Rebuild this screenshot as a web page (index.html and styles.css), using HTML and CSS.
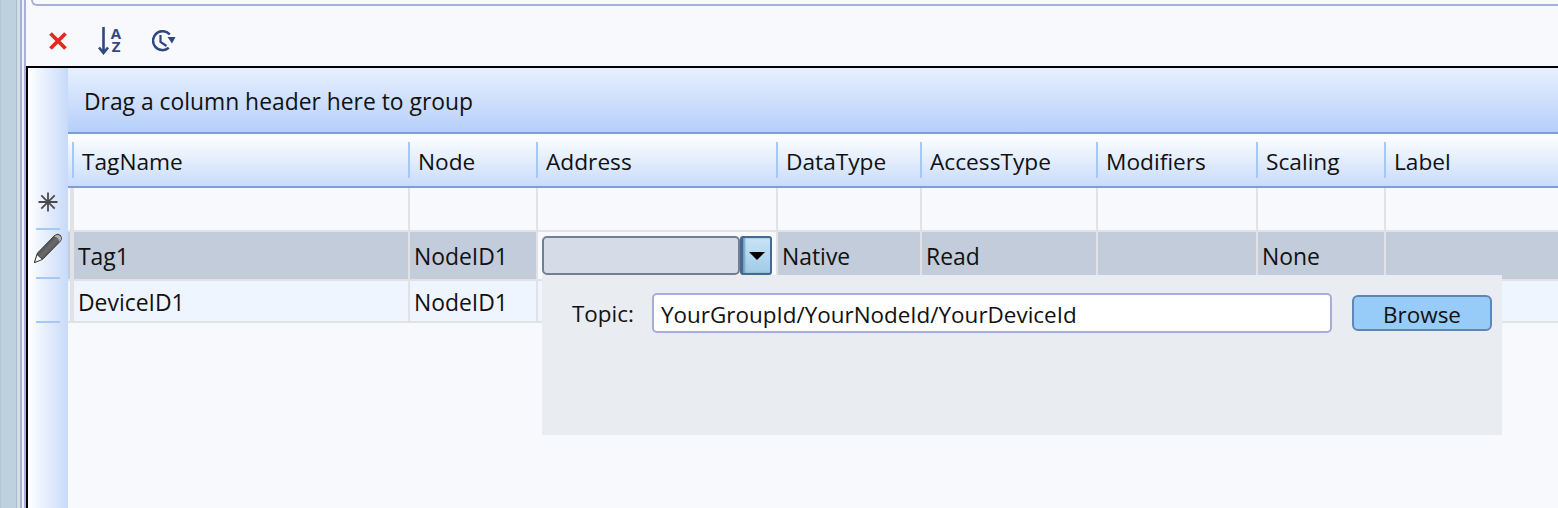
FILE: index.html
```html
<!DOCTYPE html>
<html lang="en">
<head>
<meta charset="utf-8">
<title>Tags</title>
<link rel="stylesheet" href="styles.css">
</head>
<body>
<div class="page">
  <div class="rail"></div>
  <div class="main">
    <div class="top-panel"></div>
    <div class="toolbar">
      <svg class="tool-icon" width="20" height="20" viewBox="0 0 20 20"><path d="M2.500 2.500 L17.500 17.500 M17.500 2.500 L2.500 17.500" stroke="#e8281e" stroke-width="3.800" fill="none"/></svg>
      <div class="sort-icon">
        <svg width="11" height="28" viewBox="0 0 11 28"><path d="M5.500 0 V26 M1 20.500 L5.500 26 L10 20.500" stroke="#33477f" stroke-width="2.600" fill="none"/></svg>
        <div class="az">A Z</div>
      </div>
      <svg class="tool-icon" width="24" height="22" viewBox="0 0 24 22"><path d="M16.800 17.800 A9.500 9.500 0 1 1 17.800 4.500" stroke="#33477f" stroke-width="2.500" fill="none"/><path d="M8.500 5 V12 L14.500 16" stroke="#33477f" stroke-width="2.200" fill="none"/><path d="M15.500 7 H23.500 L20 13.500 Z" fill="#33477f"/></svg>
    </div>
    <div class="grid">
      <div class="indicators">
        <div class="ind-head"></div>
        <div class="ind-cell ind-new"><svg width="20" height="20" viewBox="0 0 20 20"><path d="M10 0.500 V19.500 M0.500 10 H19.500 M3.300 3.300 L16.700 16.700 M16.700 3.300 L3.300 16.700" stroke="#4a4a4a" stroke-width="1.800" fill="none"/></svg></div>
        <div class="ind-cell ind-edit"><svg width="28" height="30" viewBox="0 0 28 30"><defs><linearGradient id="pen" x1="0" y1="0" x2="1" y2="1"><stop offset="0" stop-color="#111"/><stop offset="0.500" stop-color="#6a6a6a"/><stop offset="1" stop-color="#222"/></linearGradient></defs><path d="M0.500 29.500 L3.500 20 L20.500 2.500 Q24 0 26.500 2.500 Q28.500 5.500 26.500 8 L9.500 25.500 Z" fill="url(#pen)" stroke="#222" stroke-width="0.800"/><path d="M20.500 3 Q24 1 26.500 3.500 Q28 6 26 8 L25 8.500 Q25 4.500 20.500 3.500 Z" fill="#b5b5b5"/><path d="M0.500 29.500 L3 21.500 L8.500 26.500 Z" fill="#f8f8f8" stroke="#222" stroke-width="0.800"/></svg></div>
        <div class="ind-cell ind-plain"></div>
      </div>
      <div class="content">
        <div class="group-panel">Drag a column header here to group</div>
        <div class="columns">
          <div class="head c1">TagName</div>
          <div class="head c2">Node</div>
          <div class="head c3">Address</div>
          <div class="head c4">DataType</div>
          <div class="head c5">AccessType</div>
          <div class="head c6">Modifiers</div>
          <div class="head c7">Scaling</div>
          <div class="head c8">Label</div>
        </div>
        <div class="row row-new">
          <div class="cell c1"></div><div class="cell c2"></div><div class="cell c3"></div><div class="cell c4"></div><div class="cell c5"></div><div class="cell c6"></div><div class="cell c7"></div><div class="cell c8"></div>
        </div>
        <div class="row row-edit">
          <div class="cell c1">Tag1</div><div class="cell c2">NodeID1</div>
          <div class="cell c3 cell-editor">
            <div class="combo"><div class="combo-input"></div><div class="combo-btn"><span class="arrow"></span></div></div>
          </div>
          <div class="cell c4">Native</div><div class="cell c5">Read</div><div class="cell c6"></div><div class="cell c7">None</div><div class="cell c8"></div>
        </div>
        <div class="row row-data">
          <div class="cell c1">DeviceID1</div><div class="cell c2">NodeID1</div><div class="cell c3"></div><div class="cell c4"></div><div class="cell c5"></div><div class="cell c6"></div><div class="cell c7"></div><div class="cell c8"></div>
        </div>
        <div class="popup">
          <span class="topic-label">Topic:</span>
          <div class="topic-input">YourGroupId/YourNodeId/YourDeviceId</div>
          <div class="browse">Browse</div>
        </div>
      </div>
    </div>
  </div>
</div>
</body>
</html>
```
FILE: styles.css
```css
* { box-sizing: border-box; }
html, body { margin: 0; height: 100%; overflow: hidden; }
body { background: #f7f9fd; color: #111; font-family: "Open Sans", "Noto Sans", sans-serif; font-size: 22.700px; }
.page { display: flex; width: 1558px; height: 508px; }
.rail { width: 26px; flex: none; background: linear-gradient(90deg, #b3c6d4 0 1px, #bdd2de 1px 16px, #a9bdcb 16px 17px, #d3dee6 17px 20px, #a8b0d8 20px 22px, #f0f2fb 22px 24px, #a8b0d8 24px 26px); }
.main { flex: 1; min-width: 0; display: flex; flex-direction: column; }
.top-panel { height: 6px; flex: none; margin-left: 5px; border: 2px solid #a8b0d8; border-top: 0; border-right: 0; border-radius: 0 0 0 8px; }
.toolbar { height: 60px; flex: none; display: flex; align-items: center; gap: 30px; padding: 10px 0 0 22px; }
.sort-icon { width: 24px; height: 28px; flex: none; display: flex; gap: 1px; }
.sort-icon svg { flex: none; }
.az { width: 13px; color: #33477f; font-size: 15px; font-weight: 700; line-height: 13px; text-align: center; }
.tool-icon { flex: none; }
.grid { flex: 1; display: flex; border-left: 2px solid #000; border-top: 2px solid #000; min-height: 0; }
.indicators { width: 40px; flex: none; background: linear-gradient(90deg, #fff, #c8daf9); display: flex; flex-direction: column; align-items: center; }
.ind-head { height: 120px; flex: none; }
.ind-cell { width: 24px; display: flex; justify-content: center; border-bottom: 2px solid #a6c8f5; flex: none; }
.ind-cell svg { flex: none; }
.ind-new { height: 42px; padding-top: 4px; }
.ind-edit { height: 49px; padding-top: 3px; margin-left: -1px; }
.ind-plain { height: 44px; }
.content { flex: 1; min-width: 0; position: relative; }
.group-panel { height: 66px; display: flex; align-items: center; padding: 2px 0 0 16px; font-size: 22.850px; background: linear-gradient(180deg, #e7f0fe, #b6cffa); border-bottom: 2px solid #7d9fd6; }
.columns { display: flex; height: 54px; padding: 8px 0 0 4px; background: linear-gradient(180deg, #fff, #c8dcfb); border-bottom: 2px solid #7d9fd6; align-items: stretch; }
.head { display: flex; align-items: center; border-left: 2px solid #a6c8f5; padding: 2px 0 0 8px; height: 36px; white-space: nowrap; }
.c1 { width: 336px; } .c2 { width: 128px; } .c3 { width: 240px; } .c4 { width: 144px; } .c5 { width: 176px; } .c6 { width: 160px; } .c7 { width: 128px; } .c8 { width: 170px; }
.row { display: flex; padding-left: 4px; border-bottom: 2px solid #e0e2e6; font-size: 22.900px; }
.cell { flex: none; display: flex; align-items: center; border-left: 2px solid #e0e2e6; padding: 2px 0 0 4px; white-space: nowrap; overflow: hidden; }
.row > .cell:first-child { border-left-width: 4px; margin-left: -2px; width: 338px; }
.row-new { height: 44px; background: #f7f9fd; }
.row-edit { height: 49px; background: #c3ccda; }
.row-data { height: 42px; background: #eff5fe; }
.row .cell-editor { background: #f7f9fd; padding: 4px; }
.combo { display: flex; width: 100%; height: 39px; }
.combo-input { flex: 1; background: #d6dce7; border: 2px solid #717f90; border-radius: 5px; }
.combo-btn { width: 32px; flex: none; background: linear-gradient(180deg, #c8e4f6, #a0cbe6); border: 2px solid #46698f; border-left-width: 3px; border-radius: 3px; box-shadow: inset 2px 0 2px #6f9cc2; display: flex; align-items: center; justify-content: center; }
.arrow { width: 0; height: 0; border-left: 8px solid transparent; border-right: 8px solid transparent; border-top: 8px solid #000; }
.popup { position: absolute; left: 474px; top: 207px; width: 960px; height: 160px; font-size: 22.450px; background: #e9ecf1; display: flex; align-items: flex-start; padding: 18px 10px 0 30px; }
.topic-label { line-height: 42px; width: 80px; flex: none; }
.topic-input { width: 680px; height: 40px; flex: none; background: #fff; border: 2px solid #a4aed8; border-radius: 5px; padding: 2px 0 0 7px; line-height: 36px; white-space: nowrap; }
.browse { width: 140px; height: 36px; margin: 2px 0 0 20px; padding-top: 2px; flex: none; background: #97ccf8; border: 2px solid #5f87b6; border-radius: 6px; display: flex; align-items: center; justify-content: center; }
```
